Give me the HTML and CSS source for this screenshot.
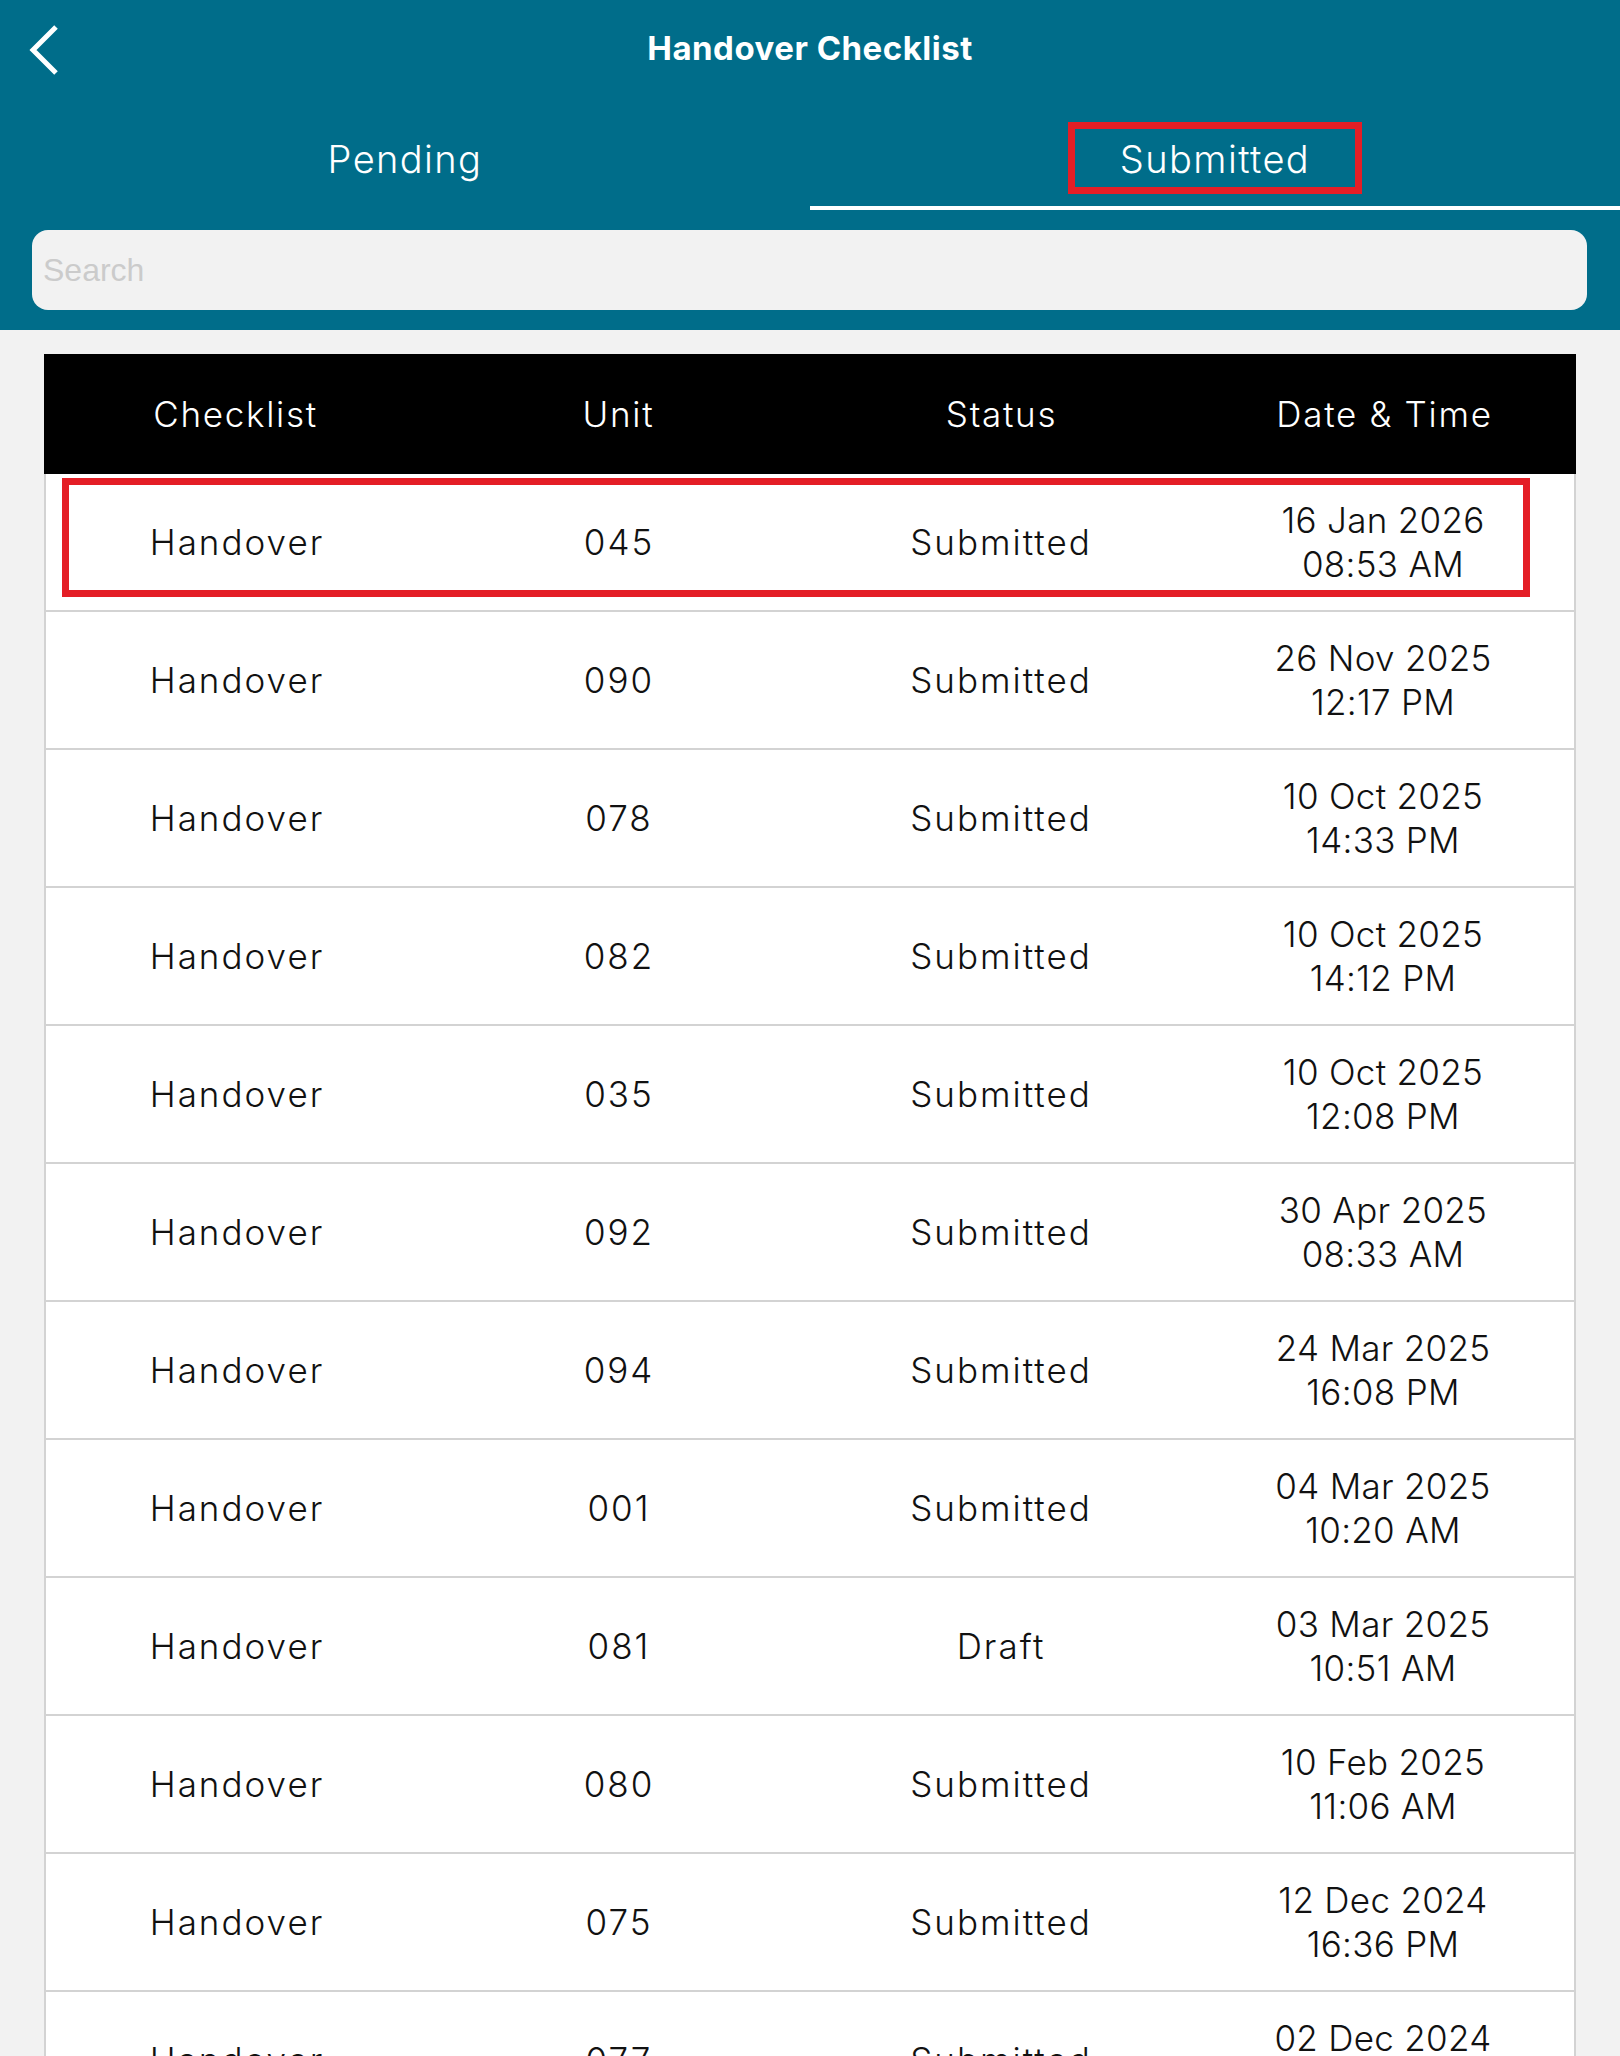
FILE: index.html
```html
<!DOCTYPE html>
<html lang="en">
<head>
<meta charset="utf-8">
<title>Handover Checklist</title>
<link rel="stylesheet" href="styles.css">
</head>
<body>
<div class="screen">
  <header class="appbar">
    <div class="topbar">
      <div class="back">
        <svg width="80" height="96" viewBox="0 0 80 96" aria-hidden="true">
          <path d="M56 27 L33 50 L56 73" fill="none" stroke="#fff" stroke-width="5"/>
        </svg>
      </div>
      <h1 class="title">Handover Checklist</h1>
      <div></div>
    </div>
    <nav class="tabs">
      <div class="tab"><span class="tab-label">Pending</span></div>
      <div class="tab tab-active"><span class="tab-label tab-marked">Submitted</span></div>
    </nav>
    <div class="search"><input type="text" placeholder="Search"></div>
  </header>

  <main class="table">
    <div class="thead row-grid">
      <div>Checklist</div><div>Unit</div><div>Status</div><div>Date &amp; Time</div>
    </div>
    <div class="trow row-grid">
      <div>Handover</div><div>045</div><div>Submitted</div><div class="dt">16 Jan 2026<br>08:53 AM</div>
      <span class="row-mark"></span>
    </div>
    <div class="trow row-grid">
      <div>Handover</div><div>090</div><div>Submitted</div><div class="dt">26 Nov 2025<br>12:17 PM</div>
    </div>
    <div class="trow row-grid">
      <div>Handover</div><div>078</div><div>Submitted</div><div class="dt">10 Oct 2025<br>14:33 PM</div>
    </div>
    <div class="trow row-grid">
      <div>Handover</div><div>082</div><div>Submitted</div><div class="dt">10 Oct 2025<br>14:12 PM</div>
    </div>
    <div class="trow row-grid">
      <div>Handover</div><div>035</div><div>Submitted</div><div class="dt">10 Oct 2025<br>12:08 PM</div>
    </div>
    <div class="trow row-grid">
      <div>Handover</div><div>092</div><div>Submitted</div><div class="dt">30 Apr 2025<br>08:33 AM</div>
    </div>
    <div class="trow row-grid">
      <div>Handover</div><div>094</div><div>Submitted</div><div class="dt">24 Mar 2025<br>16:08 PM</div>
    </div>
    <div class="trow row-grid">
      <div>Handover</div><div>001</div><div>Submitted</div><div class="dt">04 Mar 2025<br>10:20 AM</div>
    </div>
    <div class="trow row-grid">
      <div>Handover</div><div>081</div><div>Draft</div><div class="dt">03 Mar 2025<br>10:51 AM</div>
    </div>
    <div class="trow row-grid">
      <div>Handover</div><div>080</div><div>Submitted</div><div class="dt">10 Feb 2025<br>11:06 AM</div>
    </div>
    <div class="trow row-grid">
      <div>Handover</div><div>075</div><div>Submitted</div><div class="dt">12 Dec 2024<br>16:36 PM</div>
    </div>
    <div class="trow row-grid">
      <div>Handover</div><div>077</div><div>Submitted</div><div class="dt">02 Dec 2024<br>15:10 PM</div>
    </div>
  </main>
</div>
</body>
</html>
```

FILE: styles.css
```css
html, body {
  margin: 0;
  padding: 0;
}

body {
  background: #f2f2f2;
}

.screen {
  width: 1620px;
  height: 2056px;
  overflow: hidden;
  background: #f2f2f2;
  font-family: Inter, "Open Sans", sans-serif;
}

.appbar {
  background: #006d8a;
  padding-bottom: 20px;
}

.topbar {
  display: grid;
  grid-template-columns: 1fr auto 1fr;
  align-items: center;
  height: 96px;
}

.back {
  height: 96px;
}

.back svg {
  display: block;
}

.title {
  margin: 0;
  color: #fff;
  font-size: 33px;
  font-weight: 700;
  letter-spacing: 0.5px;
}

.tabs {
  display: grid;
  grid-template-columns: 1fr 1fr;
}

.tab {
  display: flex;
  justify-content: center;
  padding: 26px 0 12px;
  border-bottom: 4px solid transparent;
}

.tab-active {
  border-bottom-color: #fff;
}

.tab-label {
  box-sizing: border-box;
  width: 294px;
  height: 72px;
  display: flex;
  align-items: center;
  justify-content: center;
  border: 7px solid transparent;
  color: #fff;
  font-size: 38px;
  font-weight: 300;
  letter-spacing: 1.4px;
  padding-top: 1px;
}

.tab-marked {
  border-color: #e41e26;
}

.search {
  margin: 20px 33px 0 32px;
  height: 80px;
  background: #f2f2f2;
  border-radius: 16px;
  display: flex;
  align-items: center;
  padding-left: 11px;
}

.search input {
  border: 0;
  background: transparent;
  outline: none;
  width: 100%;
  padding: 0;
  font-family: "Liberation Sans", Arial, sans-serif;
  font-size: 32px;
  color: #333;
}

.search input::placeholder {
  color: #cbcbcb;
}

.table {
  display: block;
  margin: 24px 44px 0;
}

.row-grid {
  display: grid;
  grid-template-columns: repeat(4, 1fr);
  align-items: center;
  text-align: center;
}

.thead {
  height: 120px;
  background: #000;
  color: #fff;
  font-size: 35px;
  font-weight: 300;
  letter-spacing: 1.7px;
}

.trow {
  position: relative;
  height: 136px;
  background: #fff;
  border: 2px solid #d3d3d3;
  border-top: 0;
  color: #111;
  font-size: 35px;
  font-weight: 300;
  letter-spacing: 2px;
}

.dt {
  line-height: 44px;
  letter-spacing: 0.3px;
}

.row-mark {
  position: absolute;
  left: 16px;
  top: 4px;
  width: 1468px;
  height: 119px;
  box-sizing: border-box;
  border: 7px solid #e41e26;
  pointer-events: none;
}
```
